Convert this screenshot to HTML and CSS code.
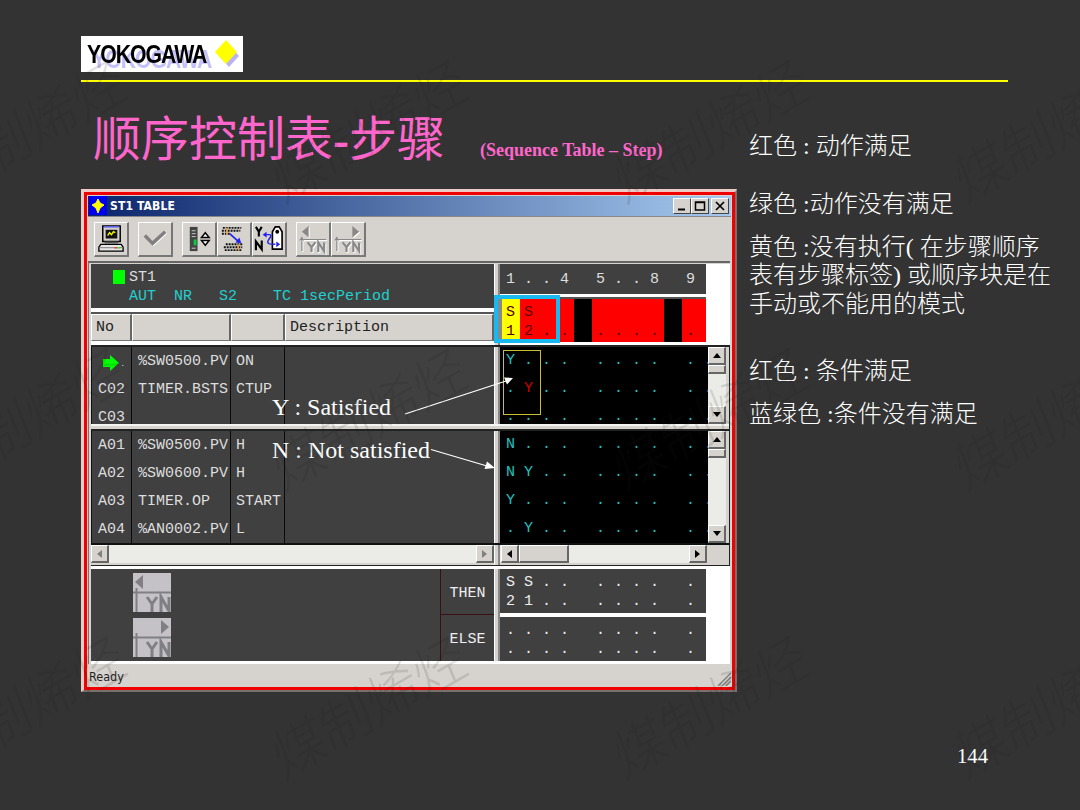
FILE: index.html
```html
<!DOCTYPE html>
<html lang="zh-CN">
<head>
  <meta charset="UTF-8">
  <title>顺序控制表-步骤</title>
  <meta name="viewport" content="width=device-width, initial-scale=1.0">
  <link rel="stylesheet" href="styles.css">
</head>
<body>
<div class="slide">

  <!-- Header -->
  <header class="header">
    <div class="logo">
      <span class="logo-text">YOKOGAWA</span>
      <svg class="logo-mark" width="28" height="32" viewBox="0 0 28 32">
        <path d="M16 7l10 11-10 11L6 18z" fill="#b9b3f5"/>
        <path d="M13 2l11 12-11 12L2 14z" fill="#ff0"/>
      </svg>
    </div>
  </header>

  <div class="heading">
    <h1>顺序控制表<b>-</b>步骤</h1>
    <span class="subtitle">(Sequence Table – Step)</span>
  </div>

  <div class="content">
    <!-- ST1 window -->
    <div class="window">
      <div class="frame">
        <div class="titlebar">
          <svg width="18" height="19" viewBox="0 0 18 19"><path d="M0 0h18v19H0z" fill="#0000f0"/><path d="M9 3l2 4 4 2-4 3-2 5-2-5-4-3 4-2z" fill="#ff0" stroke="#ff0"/></svg>
          <span class="titlebar-text">ST1 TABLE</span>
          <div class="win-btn"><svg width="16" height="14"><path d="M4 10.5h7" stroke="#000" stroke-width="2"/></svg></div>
          <div class="win-btn"><svg width="16" height="14"><path d="M3.5 3h9v8h-9zM3 3.5h10" fill="none" stroke="#000" stroke-width="1.5"/></svg></div>
          <div class="win-btn close"><svg width="16" height="14"><path d="M4 3l8 8M12 3l-8 8" stroke="#000" stroke-width="1.7"/></svg></div>
        </div>

        <div class="toolbar">
          <div class="tool">
            <svg width="32" height="32" viewBox="0 0 33 33">
              <path d="M8 3h18v16H8z" fill="#d4d0c8" stroke="#000" stroke-width="1.5"/>
              <path d="M9 4h16" stroke="#66f" stroke-width="1.5"/>
              <path d="M11 7h12v9H11z" fill="#111"/>
              <path d="M13 13l2-3 2 2 2-3 2 1" fill="none" stroke="#ee0" stroke-width="1.5"/>
              <path d="M10 19h14v2H10z" fill="#555"/>
              <path d="M6 22h21l2 3v4H4v-4z" fill="#e8e8e8" stroke="#000" stroke-width="1.4"/>
              <path d="M4 25.5h25" stroke="#777"/><path d="M20 25.5h3" stroke="#f33" stroke-width="1.5"/><path d="M23 25.5h3" stroke="#3d3" stroke-width="1.5"/>
            </svg>
          </div>
          <div class="tool gap">
            <svg width="32" height="32" viewBox="0 0 33 33">
              <path d="M7 14l8 8L28 10" fill="none" stroke="#fff" stroke-width="3"/>
              <path d="M6 13l8 8L27 9" fill="none" stroke="#808080" stroke-width="3.6"/>
            </svg>
          </div>
          <div class="tool gap">
            <svg width="32" height="32" viewBox="0 0 33 33">
              <path d="M7 4h8v25H7z" fill="#444"/><path d="M9 8h4M9 11h4M9 14h4M9 26h4" stroke="#ccc"/>
              <path d="M11 17h3v6h-3z" fill="#0c4"/>
              <path d="M23 10l4 5h-8zM23 23l4-5h-8z" fill="#fff" stroke="#000" stroke-width="1.5"/>
            </svg>
          </div>
          <div class="tool">
            <svg width="32" height="32" viewBox="0 0 33 33">
              <path d="M5 5h19M4 8h19M4 11h8" stroke="#111" stroke-width="2" stroke-dasharray="2 1"/>
              <path d="M8 22h18M6 25h19M7 28h18" stroke="#111" stroke-width="2" stroke-dasharray="2 1"/>
              <path d="M9 5v7M21 22v6" stroke="#e93" stroke-width="1.5"/>
              <path d="M12 11l9 8" stroke="#22e" stroke-width="1.8"/><path d="M24 21l-6-1 4-5z" fill="#22e"/>
            </svg>
          </div>
          <div class="tool">
            <svg width="32" height="32" viewBox="0 0 33 33">
              <path d="M3 4l3 5 3-5M6 9v5M3 28V19l6 8v-9" fill="none" stroke="#000" stroke-width="2.2"/>
              <path d="M20 27V9l3-5h4l3 5v18z" fill="#fff" stroke="#000" stroke-width="1.7"/>
              <circle cx="25" cy="9" r="2" fill="#000"/>
              <path d="M12 12h5q3 0 0 4t-1 5q0 1 7 1" fill="none" stroke="#22e" stroke-width="1.5"/>
              <path d="M10 12l4-3v6zM28 22l-4-3v6z" fill="#22e"/>
            </svg>
          </div>
          <div class="tool gap disabled">
            <svg width="32" height="32" viewBox="0 0 33 33">
              <path d="M12 3v12l-7-6z" fill="#888"/><path d="M3 17h27M5 15v14M3 18l2-3 2 3" fill="none" stroke="#888" stroke-width="1.2"/>
              <path d="M11 20l4 5 4-5M15 25v5M22 30V20l6 9v-9" fill="none" stroke="#888" stroke-width="2.2"/>
            </svg>
          </div>
          <div class="tool disabled">
            <svg width="32" height="32" viewBox="0 0 33 33">
              <path d="M21 3v12l7-6z" fill="#888"/><path d="M3 17h27M5 15v14M3 18l2-3 2 3" fill="none" stroke="#888" stroke-width="1.2"/>
              <path d="M11 20l4 5 4-5M15 25v5M22 30V20l6 9v-9" fill="none" stroke="#888" stroke-width="2.2"/>
            </svg>
          </div>
        </div>

        <div class="table-area">
          <!-- Block status and column heads -->
          <div class="head">
            <div class="left">
              <div class="block-info">
                <div class="block-name"><i class="lamp"></i>ST1</div>
                <div class="block-mode">AUT  NR   S2    TC 1secPeriod</div>
              </div>
              <div class="col-heads">
                <div class="c-no">No</div>
                <div class="c-tag"></div>
                <div class="c-data"></div>
                <div class="c-desc">Description</div>
              </div>
            </div>
            <div class="split"></div>
            <div class="right">
              <div class="rule-no">1 . . 4   5 . . 8   9</div>
              <div class="steps"><div>S S</div><div>1 2 . .   . . . .   .</div></div>
            </div>
          </div>

          <!-- Conditions and actions -->
          <div class="middle">
            <div class="pane conditions">
              <div class="left list">
                <div class="row"><span class="c-no"><svg width="26" height="18" viewBox="0 0 26 18"><path d="M5 5h7V1l9 8-9 8v-4H5z" fill="#0f0"/><path d="M24 11.5h1.5" stroke="#aaa"/></svg></span><span class="c-tag">%SW0500.PV</span><span class="c-data">ON</span><span class="c-desc"></span></div>
                <div class="row"><span class="c-no">C02</span><span class="c-tag">TIMER.BSTS</span><span class="c-data">CTUP</span><span class="c-desc"></span></div>
                <div class="row"><span class="c-no">C03</span><span class="c-tag"></span><span class="c-data"></span><span class="c-desc"></span></div>
              </div>
              <div class="split"></div>
              <div class="matrix">
                <div>Y . . .   . . . .   . .</div>
                <div>. <b>Y</b> . .   . . . .   . .</div>
                <div>. . . .   . . . .   . .</div>
              </div>
              <div class="vscroll"><i class="sb up"></i><i class="thumb"></i><i class="sb down"></i></div>
            </div>
            <div class="hsplit"></div>
            <div class="pane actions">
              <div class="left list">
                <div class="row"><span class="c-no">A01</span><span class="c-tag">%SW0500.PV</span><span class="c-data">H</span><span class="c-desc"></span></div>
                <div class="row"><span class="c-no">A02</span><span class="c-tag">%SW0600.PV</span><span class="c-data">H</span><span class="c-desc"></span></div>
                <div class="row"><span class="c-no">A03</span><span class="c-tag">TIMER.OP</span><span class="c-data">START</span><span class="c-desc"></span></div>
                <div class="row"><span class="c-no">A04</span><span class="c-tag">%AN0002.PV</span><span class="c-data">L</span><span class="c-desc"></span></div>
              </div>
              <div class="split"></div>
              <div class="matrix">
                <div>N . . .   . . . .   . .</div>
                <div>N Y . .   . . . .   . .</div>
                <div>Y . . .   . . . .   . .</div>
                <div>. Y . .   . . . .   . .</div>
              </div>
              <div class="vscroll"><i class="sb up"></i><i class="thumb"></i><i class="sb down"></i></div>
            </div>
            <div class="hscrolls">
              <div class="hscroll left"><i class="sb prev off"></i><i class="sb next off"></i></div>
              <div class="split"></div>
              <div class="hscroll wide"><i class="sb prev"></i><i class="thumb"></i><i class="sb next"></i></div>
            </div>
          </div>

          <!-- THEN / ELSE -->
          <div class="bottom">
            <div class="left then-else">
              <div class="yn-icons">
                <svg width="38" height="39" viewBox="0 0 38 39"><path d="M0 0h38v39H0z" fill="#c4c2c6"/><path d="M10 2v14L2 9z" fill="#808084"/><path d="M0 19.5h38M3.500 15v24" stroke="#808084" stroke-width="2"/><path d="M14 24l5 7 5-7M19 31v8M28 39V24l8 14V24" fill="none" stroke="#808084" stroke-width="3"/></svg>
                <svg width="38" height="39" viewBox="0 0 38 39"><path d="M0 0h38v39H0z" fill="#c4c2c6"/><path d="M28 2v14l8-7z" fill="#808084"/><path d="M0 19.5h38M3.500 15v24" stroke="#808084" stroke-width="2"/><path d="M14 24l5 7 5-7M19 31v8M28 39V24l8 14V24" fill="none" stroke="#808084" stroke-width="3"/></svg>
              </div>
              <div class="te-labels"><div>THEN</div><div>ELSE</div></div>
            </div>
            <div class="split"></div>
            <div class="right">
              <div class="next-steps"><div>S S . .   . . . .   .</div><div>2 1 . .   . . . .   .</div></div>
              <div class="next-steps"><div>. . . .   . . . .   .</div><div>. . . .   . . . .   .</div></div>
            </div>
          </div>
        </div>

        <div class="statusbar">
          <span>Ready</span>
          <svg width="14" height="14" viewBox="0 0 14 14"><path d="M1 14L14 1M5 14l9-9M9 14l5-5" stroke="#808080" stroke-width="1.5"/></svg>
        </div>
      </div>
    </div>

    <!-- Legend -->
    <div class="legend">
      <p class="l1">红色 : 动作满足</p>
      <p class="l2">绿色 :动作没有满足</p>
      <p class="l3">黄色 :没有执行( 在步骤顺序<br>表有步骤标签) 或顺序块是在<br>手动或不能用的模式</p>
      <p class="l4">红色 : 条件满足</p>
      <p class="l5">蓝绿色 :条件没有满足</p>
    </div>
  </div>

  <footer class="page-no">144</footer>

  <!-- Callouts over the window -->
  <div class="note note-y">Y : Satisfied</div>
  <div class="note note-n">N : Not satisfied</div>
  <div class="mark mark-steps"></div>
  <div class="mark mark-cells"></div>
  <svg class="arrows" width="1080" height="810">
    <path d="M405 414L506 381M431 449.5l56 16.5" stroke="#fff" stroke-width="1.3"/>
    <path d="M513 378l-9-.5 3 7zM495 468l-8-6.500-2.500 7.500z" fill="#fff"/>
  </svg>

  <!-- Watermark -->
  <div class="watermark">
    <span>煤制烯烃</span><span>煤制烯烃</span><span>煤制烯烃</span><span>煤制烯烃</span>
    <span>煤制烯烃</span><span>煤制烯烃</span><span>煤制烯烃</span><span>煤制烯烃</span>
    <span>煤制烯烃</span><span>煤制烯烃</span><span>煤制烯烃</span><span>煤制烯烃</span>
  </div>
</div>
</body>
</html>
```
FILE: styles.css
```css
* {
  margin: 0;
  padding: 0;
  box-sizing: border-box;
}

body {
  background: #333;
}

svg {
  display: block;
}

.slide {
  position: relative;
  width: 1080px;
  height: 810px;
  padding: 36px 0 0 81px;
  overflow: hidden;
  background: #333;
  color: #fff;
  font-family: "Liberation Serif", "Noto Sans CJK SC", serif;
}

/* Header */
.header {
  width: 927px;
  height: 46px;
  border-bottom: 2px solid #ff0;
}

.logo {
  display: flex;
  align-items: center;
  justify-content: space-between;
  width: 162px;
  height: 36px;
  padding: 0 2px 0 6px;
  background: #fff;
}

.logo-text {
  width: 119px;
  color: #000;
  font: bold 25px/36px "Liberation Sans", sans-serif;
  white-space: nowrap;
  transform: scaleX(.85);
  transform-origin: left;
  letter-spacing: -1.2px;
  text-shadow: 6px 5px 0 #c4c0fa;
}

.heading {
  display: flex;
  align-items: baseline;
  height: 107px;
  padding: 23px 0 0 12px;
  color: #f6c;
}

h1 {
  font-size: 48px;
  font-weight: 400;
  line-height: 70px;
  width: 387px;
}

.subtitle {
  font-size: 18px;
  font-weight: bold;
  white-space: nowrap;
}

.content {
  display: flex;
}

/* Window */
.window {
  width: 656px;
  height: 503px;
  border: solid;
  border-width: 3px 2px 2px 3px;
  border-color: #eccac6 #77706c #77706c #eccac6;
  font-family: "Liberation Mono", monospace;
  font-size: 15px;
}

.frame {
  height: 498px;
  padding: 1px 1px 0;
  border: 3px solid #f00000;
  background: #d6d3ce;
}

.titlebar {
  display: flex;
  align-items: center;
  height: 20px;
  padding: 0 2px 1px 1px;
  background: linear-gradient(to right, #0a246a, #a6caf0);
}

.titlebar-text {
  flex: 1;
  padding-left: 3px;
  font: bold 12px "DejaVu Sans Condensed", "DejaVu Sans", sans-serif;
  font-stretch: condensed;
  letter-spacing: .15px;
}

.win-btn,
.tool,
.sb,
.thumb {
  background: #d6d3ce;
  border: 1px solid;
  border-color: #fff #444 #444 #fff;
}

.win-btn {
  width: 18px;
  height: 16px;
}

.win-btn.close {
  margin-left: 2px;
}

.toolbar {
  display: flex;
  height: 45px;
  padding: 5px 0 0 6px;
  border-top: 1px solid #888;
}

.tool {
  width: 35px;
  height: 35px;
  border-width: 1px 2px 2px 1px;
  border-color: #fff #777 #777 #fff;
}

.gap {
  margin-left: 9px;
}

.disabled svg {
  filter: drop-shadow(1px 1px 0 #fff);
}

/* Sequence table */
.table-area {
  height: 403px;
  margin-right: 1px;
  padding: 1px 0 0 2px;
  border-top: 2px solid #666;
  border-left: 1px solid #777;
}

.left {
  width: 403px;
  flex: none;
}

.split {
  width: 6px;
  flex: none;
  background: linear-gradient(to right, #fff 1px, #d6d3ce 1px, #d6d3ce 4px, #888 4px);
}

.head {
  display: flex;
  height: 81px;
  background: #fff;
}

.block-info {
  height: 44px;
  padding: 4px 0 0 38px;
  background: #404040;
  line-height: 19px;
}

.block-name {
  position: relative;
  color: #ddd;
}

.lamp {
  position: absolute;
  left: -16px;
  top: 2px;
  width: 12px;
  height: 14px;
  background: #0f0;
}

.block-mode {
  color: #21cfcf;
  white-space: pre;
}

.col-heads {
  display: flex;
  height: 29px;
  margin-top: 4px;
  border-top: 2px solid #555;
  color: #222;
  line-height: 25px;
}

.col-heads div {
  border: solid;
  border-width: 1px 2px 1px 1px;
  border-color: #fff #666 #777 #fff;
  background: #d6d3ce;
}

.c-no { width: 41px; }
.c-tag { width: 99px; }
.c-data { width: 54px; }
.c-desc { width: 209px; }

.col-heads .c-no,
.col-heads .c-desc {
  padding-left: 4px;
}

.right {
  width: 206px;
}

.right div div,
.rule-no,
.matrix div {
  white-space: pre;
}

.rule-no {
  height: 30px;
  padding-left: 6px;
  background: #404040;
  color: #ddd;
  line-height: 32px;
}

.steps {
  height: 45px;
  margin-top: 3px;
  padding: 4px 0 0 6px;
  border-top: 2px solid #555;
  background: linear-gradient(to right, #888 2px, #ff0 2px, #ff0 20px, #f00 20px, #f00 74px, #000 74px, #000 92px, #f00 92px, #f00 164px, #000 164px, #000 182px, #f00 182px);
  color: #500;
  line-height: 19px;
}

.middle {
  height: 221px;
  border: solid #222;
  border-width: 2px 1px 1px 0;
}

.pane {
  display: flex;
}

.conditions { height: 77px; overflow: hidden; }
.actions { height: 114px; border-bottom: 2px solid #111; }

.hsplit {
  height: 7px;
  background: linear-gradient(#f4f4f2 2px, #d6d3ce 2px, #d6d3ce 5px, #222 5px);
}

.list {
  background: #404040;
  border-left: 1px solid #111;
}

.row {
  display: flex;
  height: 28px;
  color: #ddd;
  line-height: 29px;
}

.row span {
  border-right: 1px solid #0a0a0a;
  padding-left: 6px;
}

.row .c-no { width: 40px; }
.row .c-data { padding-left: 5px; }
.row .c-desc { border-right: 0; }
.row svg { margin-top: 7px; }

.matrix {
  width: 208px;
  padding-left: 6px;
  overflow: hidden;
  background: #000;
  color: #21c0c0;
  line-height: 28px;
}

.matrix b {
  font-weight: 400;
  color: #d00000;
}

.vscroll {
  display: flex;
  flex-direction: column;
  width: 18px;
  background: #ebebe8;
}

.sb,
.thumb {
  display: flex;
  align-items: center;
  justify-content: center;
  flex: none;
  border-width: 1px 2px 2px 1px;
  border-color: #fff #666 #666 #fff;
}

.sb {
  width: 18px;
  height: 18px;
}

.vscroll .thumb { height: 9px; }
.vscroll .down { margin-top: auto; }

.sb::before {
  content: "";
  border: 4px solid transparent;
}

.up::before { border-bottom: 5px solid #000; border-top: 0; }
.down::before { border-top: 5px solid #000; border-bottom: 0; }
.prev::before { border-right: 5px solid #000; border-left: 0; }
.next::before { border-left: 5px solid #000; border-right: 0; }
.off.prev::before { border-right-color: #808080; }
.off.next::before { border-left-color: #808080; }

.hscrolls {
  display: flex;
  height: 20px;
}

.hscroll {
  display: flex;
  height: 18px;
  background: #ebebe8;
}

.hscroll.wide { width: 207px; padding-left: 1px; }
.hscroll .thumb { width: 50px; height: 18px; }
.hscroll .next { margin-left: auto; }

.bottom {
  display: flex;
  height: 98px;
  padding: 3px 0;
  background: #fff;
}

.then-else {
  display: flex;
  justify-content: space-between;
  height: 92px;
  background: #404040;
}

.yn-icons {
  display: flex;
  flex-direction: column;
  gap: 6px;
  padding: 4px 0 0 42px;
}

.te-labels {
  width: 54px;
  border-left: 1px solid #3a1010;
  color: #eee;
  text-align: center;
  line-height: 50px;
}

.te-labels div {
  height: 46px;
}

.te-labels div:first-child {
  border-bottom: 1px solid #3a1010;
}

.next-steps {
  height: 44px;
  margin-bottom: 4px;
  padding: 4px 0 0 6px;
  background: #404040;
  color: #eee;
  line-height: 19px;
}

.statusbar {
  display: flex;
  justify-content: space-between;
  align-items: flex-end;
  height: 23px;
  padding: 0 0 1px 1px;
  color: #222;
  font: 12.5px/18px "DejaVu Sans Condensed", "DejaVu Sans", sans-serif;
  font-stretch: condensed;
}

/* Legend */
.legend {
  padding-left: 12px;
  font-size: 24px;
  font-weight: 300;
  line-height: 28.8px;
  white-space: nowrap;
  margin-top: -57px;
}

.l2 { margin-top: 29px; }
.l3 { margin-top: 14px; }
.l4 { margin-top: 38px; }
.l5 { margin-top: 14px; }

.page-no {
  padding: 53px 0 0 876px;
  font-size: 20.7px;
}

/* Callouts */
.note {
  position: absolute;
  left: 272px;
  font-size: 24px;
  line-height: 28px;
  white-space: nowrap;
}

.note-y { top: 393px; }
.note-n { top: 436px; }

.mark {
  position: absolute;
}

.mark-steps {
  left: 494px;
  top: 295px;
  width: 66px;
  height: 48px;
  border: 4px solid #18b8f0;
}

.mark-cells {
  left: 503px;
  top: 350px;
  width: 38px;
  height: 65px;
  border: 1px solid #c8c030;
}

.arrows {
  position: absolute;
  left: 0;
  top: 0;
}

/* Watermark */
.watermark {
  position: absolute;
  left: -144px;
  top: -17px;
  display: grid;
  grid-template-columns: repeat(4, 341px);
  grid-auto-rows: 288px;
  place-items: center;
  color: rgba(32, 32, 32, .13);
  font: 300 54px "Noto Sans CJK SC", sans-serif;
  pointer-events: none;
}

.watermark span {
  transform: rotate(-30deg) skewX(-8deg);
  white-space: nowrap;
}
```
